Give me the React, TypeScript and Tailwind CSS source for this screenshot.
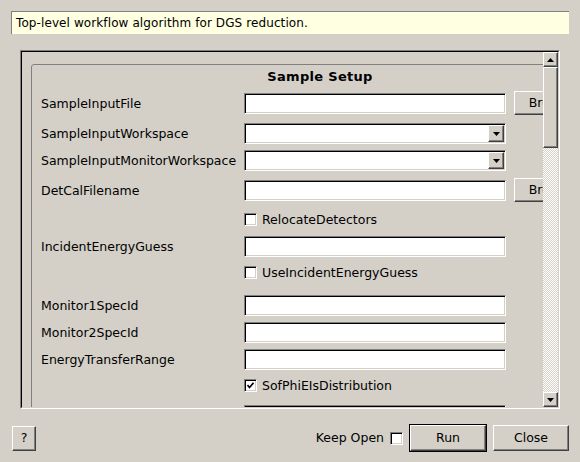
import React from 'react';

// classic Qt "windows" style bevels
const raised =
  'border border-t-white border-l-white border-r-[#404040] border-b-[#404040] shadow-[inset_-1px_-1px_0_#808080] bg-[#d4d0c8]';
const sunken =
  'border border-t-[#808080] border-l-[#808080] border-r-white border-b-white shadow-[inset_1px_1px_0_#000,inset_-1px_-1px_0_#d4d0c8] bg-white';

const Tri: React.FC<{ up?: boolean }> = ({ up }) => (
  <svg width="7" height="4" viewBox="0 0 7 4">
    <path d={up ? 'M3.5 0 L7 4 L0 4 Z' : 'M0 0 L7 0 L3.5 4 Z'} fill="#000" />
  </svg>
);

const Check: React.FC<{ checked?: boolean }> = ({ checked }) => (
  <div className={`w-[13px] h-[13px] shrink-0 flex items-center justify-center ${sunken}`}>
    {checked && (
      <svg width="7" height="7" viewBox="0 0 7 7">
        <path d="M0.5 3 L2.5 5.5 L6.5 0.8" stroke="#000" strokeWidth="1.6" fill="none" />
      </svg>
    )}
  </div>
);

const TextBox = () => <div className={`w-[262px] h-[21px] shrink-0 ${sunken}`} />;

const Combo = () => (
  <div className={`w-[262px] h-[21px] shrink-0 flex justify-end items-center pr-[1px] ${sunken}`}>
    <div className={`w-[16px] h-[17px] flex items-center justify-center ${raised}`}>
      <Tri />
    </div>
  </div>
);

const Browse = () => (
  <div className={`ml-[8px] w-[75px] h-[24px] shrink-0 flex items-center justify-center ${raised}`}>Browse</div>
);

const Label: React.FC<{ text?: string }> = ({ text }) => (
  <div className="w-[203px] shrink-0 whitespace-nowrap pt-[2px]">{text}</div>
);

const CheckRow: React.FC<{ text: string; checked?: boolean; cls: string }> = ({ text, checked, cls }) => (
  <div className={`flex items-center h-[19px] ${cls}`}>
    <Label />
    <Check checked={checked} />
    <span className="ml-[5px] whitespace-nowrap pt-[2px]">{text}</span>
  </div>
);

export default function App() {
  return (
    <div className="w-[580px] h-[462px] bg-[#d4d0c8] text-black text-[12.5px] font-['DejaVu_Sans',sans-serif] flex flex-col overflow-hidden">
      <div className="mt-[11px] mx-[11px] h-[23px] bg-[#ffffe1] border-t border-l border-[#808080] flex items-center pl-[4px] whitespace-nowrap text-[12px] tracking-[0.1px]">
        Top-level workflow algorithm for DGS reduction.
      </div>

      <div className="mt-[16px] ml-[20px] w-[540px] h-[359px] flex border border-t-[#808080] border-l-[#808080] border-r-white border-b-white">
        <div className="flex flex-1 border border-t-black border-l-black border-r-[#d4d0c8] border-b-[#d4d0c8] min-w-0">
          <div className="flex-1 overflow-hidden min-w-0">
            <div className="mt-[12px] ml-[9px] w-[578px] h-[400px] border border-[#808080] rounded-[3px] pl-[9px]">
              <div className="h-[23px] flex items-center justify-center font-bold text-[13px] tracking-[0.3px] pr-[9px]">
                Sample Setup
              </div>
              <div className="flex items-center h-[24px] mt-[3px]">
                <Label text="SampleInputFile" />
                <TextBox />
                <Browse />
              </div>
              <div className="flex items-center h-[21px] mt-[8px]">
                <Label text="SampleInputWorkspace" />
                <Combo />
              </div>
              <div className="flex items-center h-[21px] mt-[6px]">
                <Label text="SampleInputMonitorWorkspace" />
                <Combo />
              </div>
              <div className="flex items-center h-[24px] mt-[7px]">
                <Label text="DetCalFilename" />
                <TextBox />
                <Browse />
              </div>
              <CheckRow text="RelocateDetectors" cls="mt-[8px]" />
              <div className="flex items-center h-[21px] mt-[7px]">
                <Label text="IncidentEnergyGuess" />
                <TextBox />
              </div>
              <CheckRow text="UseIncidentEnergyGuess" cls="mt-[6px]" />
              <div className="flex items-center h-[21px] mt-[13px]">
                <Label text="Monitor1SpecId" />
                <TextBox />
              </div>
              <div className="flex items-center h-[21px] mt-[6px]">
                <Label text="Monitor2SpecId" />
                <TextBox />
              </div>
              <div className="flex items-center h-[21px] mt-[6px]">
                <Label text="EnergyTransferRange" />
                <TextBox />
              </div>
              <CheckRow text="SofPhiEIsDistribution" checked cls="mt-[6px]" />
              <div className="flex items-center h-[21px] mt-[10px]">
                <Label />
                <TextBox />
              </div>
            </div>
          </div>

          {/* vertical scrollbar */}
          <div className="w-[15px] shrink-0 flex flex-col">
            <div className={`h-[15px] shrink-0 flex items-center justify-center ${raised}`}>
              <Tri up />
            </div>
            <div className={`h-[81px] shrink-0 ${raised}`} />
            <div className="flex-1 bg-[repeating-conic-gradient(#ffffff_0%_25%,#d4d0c8_0%_50%)] bg-[length:2px_2px]" />
            <div className={`h-[15px] shrink-0 flex items-center justify-center ${raised}`}>
              <Tri />
            </div>
          </div>
        </div>
      </div>

      <div className="mt-[15px] h-[28px] flex items-center pl-[12px] pr-[11px]">
        <div className={`w-[24px] h-[25px] flex items-center justify-center ${raised}`}>?</div>
        <div className="flex-1" />
        <span className="whitespace-nowrap">Keep Open</span>
        <div className="ml-[6px]">
          <Check />
        </div>
        <div className="ml-[6px] border border-black">
          <div className={`w-[76px] h-[26px] flex items-center justify-center ${raised}`}>Run</div>
        </div>
        <div className={`ml-[6px] w-[76px] h-[26px] flex items-center justify-center ${raised}`}>Close</div>
      </div>
    </div>
  );
}
